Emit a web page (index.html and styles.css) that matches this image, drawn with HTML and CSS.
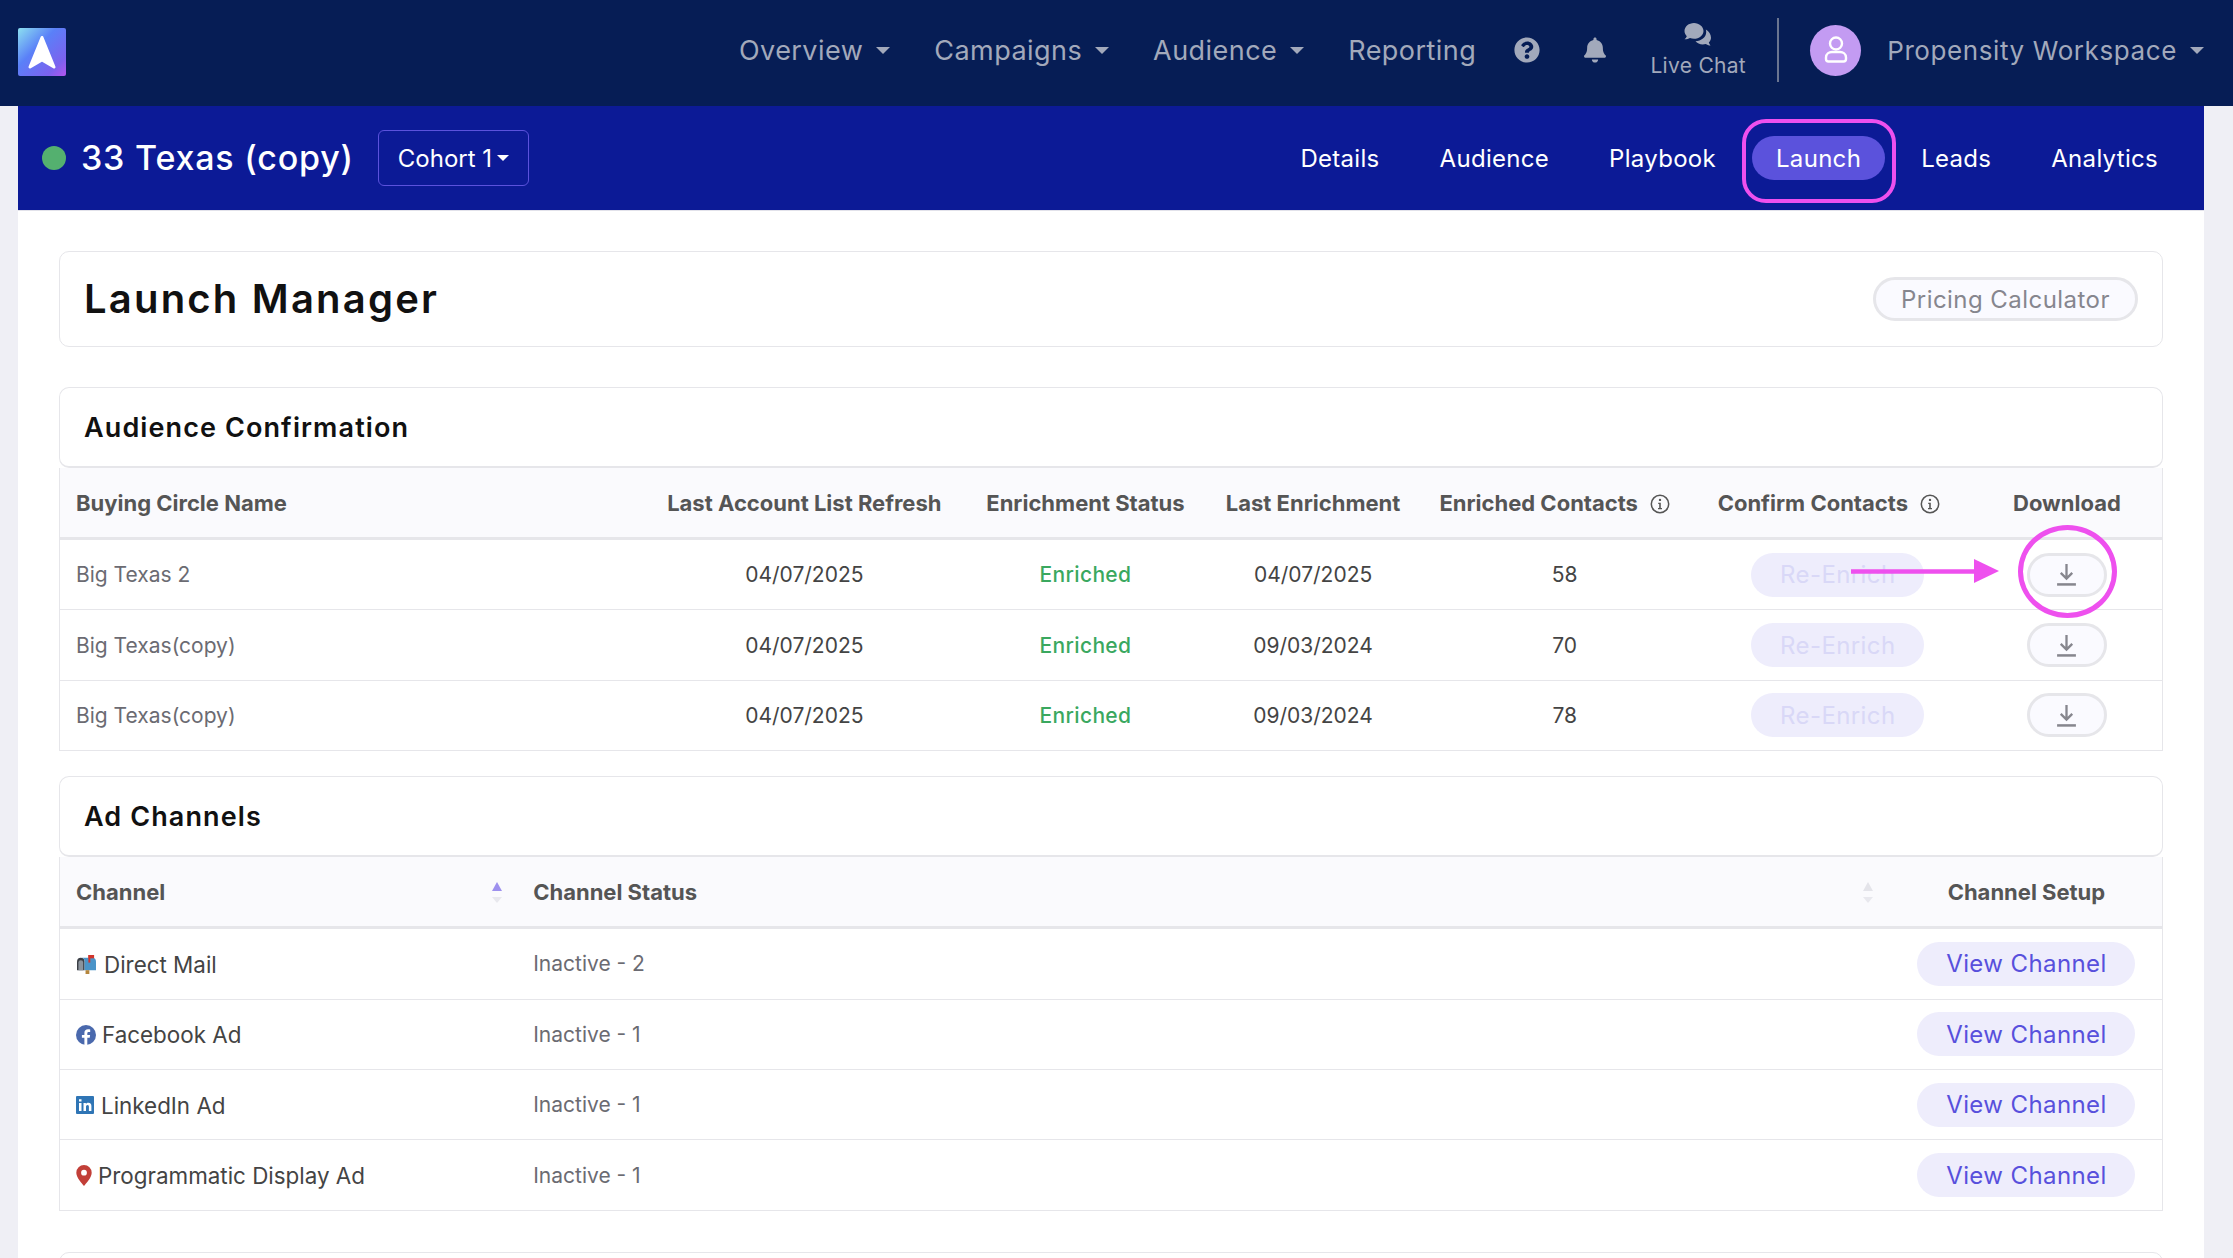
FILE: index.html
```html
<!DOCTYPE html>
<html lang="en">
<head>
<meta charset="utf-8">
<title>Launch Manager</title>
<link rel="stylesheet" href="styles.css">
</head>
<body>
<div class="page">
  <header class="topbar">
    <svg class="logo" viewBox="0 0 48 48"><defs><linearGradient id="lg" x1="0" y1="0" x2="1" y2="1"><stop offset="0" stop-color="#8ce0f0"/><stop offset=".4" stop-color="#5a80f8"/><stop offset=".8" stop-color="#7c62ee"/><stop offset="1" stop-color="#b455ee"/></linearGradient></defs><rect width="48" height="48" rx="2" fill="url(#lg)"/><path d="M24 9.500 36 39l-12-7-12 7z" fill="#fff" stroke="#fff" stroke-width="3" stroke-linejoin="round"/></svg>
    <nav class="mainnav">
      <a class="navlink caret">Overview</a>
      <a class="navlink caret">Campaigns</a>
      <a class="navlink caret">Audience</a>
      <a class="navlink">Reporting</a>
    </nav>
    <svg class="ico-help" viewBox="0 0 512 512"><path fill="#a2a9bb" d="M504 256c0 136.997-111.043 248-248 248S8 392.997 8 256C8 119.083 119.043 8 256 8s248 111.083 248 248zM262.655 90c-54.497 0-89.255 22.957-116.549 63.758-3.536 5.286-2.353 12.415 2.715 16.258l34.699 26.31c5.205 3.947 12.621 3.008 16.665-2.122 17.864-22.658 30.113-35.797 57.303-35.797 20.429 0 45.698 13.148 45.698 32.958 0 14.976-12.363 22.667-32.534 33.976C247.128 238.528 216 254.941 216 296v4c0 6.627 5.373 12 12 12h56c6.627 0 12-5.373 12-12v-1.333c0-28.462 83.186-29.647 83.186-106.667 0-58.002-60.165-102-116.531-102zM256 338c-25.365 0-46 20.635-46 46 0 25.364 20.635 46 46 46s46-20.636 46-46c0-25.365-20.635-46-46-46z"/></svg>
    <svg class="ico-bell" viewBox="0 0 448 512"><path fill="#a2a9bb" d="M224 512c35.32 0 63.97-28.65 63.97-64H160.03c0 35.35 28.65 64 63.97 64zm215.39-149.71c-19.32-20.76-55.47-51.99-55.47-154.29 0-77.7-54.48-139.9-127.94-155.16V32c0-17.67-14.32-32-31.98-32s-31.98 14.33-31.98 32v20.84C118.56 68.1 64.08 130.3 64.08 208c0 102.3-36.15 133.53-55.47 154.29-6 6.45-8.66 14.16-8.61 21.71.11 16.4 12.98 32 32.1 32h383.8c19.12 0 32-15.6 32.1-32 .05-7.55-2.61-15.27-8.61-21.71z"/></svg>
    <div class="chat">
      <svg class="ico-chat" viewBox="0 0 30 26"><g fill="#a2a9bb"><path d="M11 1C5.800 1 1.500 4.600 1.500 9c0 2 .9 3.800 2.300 5.200-.5 1.300-1.300 2.300-2.300 3.100 2 .1 3.900-.4 5.500-1.300 1.200.5 2.600.8 4 .8 5.200 0 9.500-3.600 9.500-7.800S16.200 1 11 1z"/><path d="M22.800 7.500c.3.800.4 1.600.4 2.500 0 5.300-5 9-10.700 9.200 1.600 2 4.300 3.200 7.200 3.200 1.100 0 2.100-.2 3.100-.5 1.200.9 2.800 1.500 4.700 1.600-.8-.9-1.400-1.800-1.700-3 1.400-1.300 2.200-3 2.200-4.800 0-3.500-2.100-6.500-5.200-8.200z"/></g></svg>
      <span class="chat-label">Live Chat</span>
    </div>
    <span class="divider"></span>
    <span class="avatar"><svg viewBox="0 0 32 32" width="32" height="32"><g fill="none" stroke="#fff" stroke-width="2.400"><circle cx="16" cy="9.500" r="6"/><path d="M8.500 27.500c-1.500 0-2.500-1-2.500-2.500v-1.500c0-3.500 3-5.500 6-5.500h8c3 0 6 2 6 5.500V25c0 1.500-1 2.500-2.500 2.500z"/></g></svg></span>
    <a class="workspace caret">Propensity Workspace</a>
  </header>

  <div class="content">
    <div class="subbar">
      <span class="status-dot"></span>
      <h1 class="camp-title">33 Texas (copy)</h1>
      <button class="cohort">Cohort 1<i class="mini-caret"></i></button>
      <nav class="tabs">
        <a class="tab">Details</a>
        <a class="tab">Audience</a>
        <a class="tab">Playbook</a>
        <a class="tab active">Launch</a>
        <a class="tab">Leads</a>
        <a class="tab">Analytics</a>
      </nav>
    </div>

    <main class="main">
      <section class="card title-card">
        <h2 class="page-title">Launch Manager</h2>
        <button class="ghost-btn">Pricing Calculator</button>
      </section>

      <section class="sec sec-aud">
        <div class="card sec-head"><h3 class="sec-title">Audience Confirmation</h3></div>
        <table class="tbl aud">
          <colgroup><col class="a1"><col class="a2"><col class="a3"><col class="a4"><col class="a5"><col class="a6"><col class="a7"></colgroup>
          <thead>
            <tr>
              <th class="left">Buying Circle Name</th>
              <th>Last Account List Refresh</th>
              <th>Enrichment Status</th>
              <th>Last Enrichment</th>
              <th class="th-c5">Enriched Contacts<svg class="info" viewBox="0 0 20 20"><use href="#i-info"/></svg></th>
              <th class="th-c6">Confirm Contacts<svg class="info" viewBox="0 0 20 20"><use href="#i-info"/></svg></th>
              <th class="c7">Download</th>
            </tr>
          </thead>
          <tbody>
            <tr>
              <td class="left name">Big Texas 2</td><td>04/07/2025</td><td class="ok">Enriched</td><td>04/07/2025</td><td>58</td>
              <td><button class="pill off">Re-Enrich</button></td>
              <td class="c7"><button class="dl"><svg viewBox="0 0 20 22"><use href="#i-dl"/></svg></button></td>
            </tr>
            <tr>
              <td class="left name">Big Texas(copy)</td><td>04/07/2025</td><td class="ok">Enriched</td><td>09/03/2024</td><td>70</td>
              <td><button class="pill off">Re-Enrich</button></td>
              <td class="c7"><button class="dl"><svg viewBox="0 0 20 22"><use href="#i-dl"/></svg></button></td>
            </tr>
            <tr>
              <td class="left name">Big Texas(copy)</td><td>04/07/2025</td><td class="ok">Enriched</td><td>09/03/2024</td><td>78</td>
              <td><button class="pill off">Re-Enrich</button></td>
              <td class="c7"><button class="dl"><svg viewBox="0 0 20 22"><use href="#i-dl"/></svg></button></td>
            </tr>
          </tbody>
        </table>
      </section>

      <section class="sec sec-ad">
        <div class="card sec-head"><h3 class="sec-title">Ad Channels</h3></div>
        <table class="tbl ad">
          <colgroup><col class="b1"><col class="b2"><col class="b3"></colgroup>
          <thead>
            <tr>
              <th class="left"><span class="th-sort">Channel<svg class="sort" viewBox="0 0 10 21"><path class="up on" d="M5 0l5 9H0z"/><path class="dn" d="M0 15h10l-5 6z"/></svg></span></th>
              <th class="left"><span class="th-sort st">Channel Status<svg class="sort" viewBox="0 0 10 21"><path class="up" d="M5 0l5 9H0z"/><path class="dn" d="M0 15h10l-5 6z"/></svg></span></th>
              <th>Channel Setup</th>
            </tr>
          </thead>
          <tbody>
            <tr>
              <td class="left ch"><span class="chan"><svg class="c-ico mail" viewBox="0 0 22 20"><path d="M1 7a4 4 0 0 1 8 0v9H1z" fill="#3b3f46"/><path d="M6 3h11a4 4 0 0 1 4 4v9H9V7a4 4 0 0 0-3-4z" fill="#4a94c8"/><path d="M2.500 8a2.500 2.500 0 0 1 5 0v8h-5z" fill="#8b939c"/><rect x="13" y="0" width="2" height="8" fill="#d2352c"/><rect x="13" y="0" width="6" height="3.500" fill="#d2352c"/><rect x="10" y="16" width="4" height="4" fill="#b5863c"/></svg>Direct Mail</span></td>
              <td class="left muted">Inactive - 2</td>
              <td><button class="pill">View Channel</button></td>
            </tr>
            <tr>
              <td class="left ch"><span class="chan"><svg class="c-ico fb" viewBox="0 0 20 20"><circle cx="10" cy="10" r="10" fill="#4a69ad"/><path d="M11.300 20v-7.200h2.400l.4-2.800h-2.800V8.300c0-.8.300-1.400 1.500-1.400h1.400V4.400c-.6-.1-1.400-.2-2.200-.2-2.200 0-3.600 1.300-3.600 3.700V10H5.900v2.800h2.500V20z" fill="#fff"/></svg>Facebook Ad</span></td>
              <td class="left muted">Inactive - 1</td>
              <td><button class="pill">View Channel</button></td>
            </tr>
            <tr>
              <td class="left ch"><span class="chan"><svg class="c-ico li" viewBox="0 0 18 18"><rect width="18" height="18" rx="1" fill="#2f75b5"/><path d="M3 7h2.500v8H3zM3 3.200h2.500v2.400H3zM7.500 7h2.400v1.100c.5-.8 1.400-1.300 2.500-1.300 2.200 0 3 1.400 3 3.500V15h-2.500v-4.200c0-1.100-.3-1.900-1.300-1.900S10 9.700 10 10.800V15H7.500z" fill="#fff"/></svg>LinkedIn Ad</span></td>
              <td class="left muted">Inactive - 1</td>
              <td><button class="pill">View Channel</button></td>
            </tr>
            <tr>
              <td class="left ch"><span class="chan"><svg class="c-ico pin" viewBox="0 0 16 21"><path fill-rule="evenodd" d="M8 0a7.700 7.700 0 0 1 7.700 7.700C15.700 12.500 10 18.500 8 21 6 18.500.300 12.500.300 7.700A7.700 7.700 0 0 1 8 0zm0 4.800a2.900 2.900 0 1 0 0 5.800 2.900 2.900 0 0 0 0-5.800z" fill="#c23f38"/></svg>Programmatic Display Ad</span></td>
              <td class="left muted">Inactive - 1</td>
              <td><button class="pill">View Channel</button></td>
            </tr>
          </tbody>
        </table>
      </section>

      <section class="card next-card"></section>
    </main>
  </div>

  <svg class="defs" width="0" height="0" aria-hidden="true">
    <symbol id="i-info" viewBox="0 0 20 20"><circle cx="10" cy="10" r="8.700" fill="none" stroke="#555" stroke-width="1.500"/><circle cx="10" cy="5.900" r="1.200" fill="#555"/><path d="M8.200 8.800h2.600v5.200h1.200v1.300H8v-1.300h1.200v-3.900h-1z" fill="#555"/></symbol>
    <symbol id="i-dl" viewBox="0 0 20 22"><path d="M10 1v13.500M4.500 9.500l5.500 5.500 5.500-5.500" fill="none" stroke="#86868e" stroke-width="2.200"/><path d="M1 20.500h18" stroke="#86868e" stroke-width="2.400"/></symbol>
  </svg>

  <div class="mark mark-tab"></div>
  <div class="mark mark-ring"></div>
  <svg class="mark-arrow" viewBox="0 0 148 24"><path d="M0 12.500h124" stroke="#ee50ee" stroke-width="4.500"/><path d="M123 0l25 12-25 12z" fill="#ee50ee"/></svg>
</div>
</body>
</html>
```
FILE: styles.css
```css
* { box-sizing: border-box; }
html, body { margin: 0; padding: 0; }
body {
  font-family: Inter, "Liberation Sans", sans-serif;
  background: #efeff5;
  color: #444;
}
button { font-family: inherit; cursor: pointer; }
h1, h2, h3 { margin: 0; }

.page { position: relative; width: 2233px; height: 1258px; overflow: hidden; }

/* top bar */
.topbar {
  height: 106px;
  background: #061d55;
  display: flex;
  align-items: center;
  padding: 0 29px 6px 18px;
  color: #a2a9bb;
}
.logo { width: 48px; height: 48px; margin-top: 4px; flex: none; }
.mainnav { display: flex; margin-left: auto; font-size: 27px; }
.navlink { display: inline-flex; align-items: center; letter-spacing: .45px; margin-right: 44px; }
.navlink:last-child { margin-right: 0; }
.caret::after {
  content: "";
  display: inline-block;
  margin-left: 13px;
  border-left: 7px solid transparent;
  border-right: 7px solid transparent;
  border-top: 7px solid #a2a9bb;
}
.ico-help { width: 26px; height: 26px; margin-left: 38px; flex: none; }
.ico-bell { width: 22px; height: 26px; margin-left: 44px; flex: none; }
.chat { display: flex; flex-direction: column; align-items: center; margin-left: 44px; width: 96px; }
.ico-chat { width: 30px; height: 26px; margin-bottom: 5px; }
.chat-label { font-size: 21px; line-height: 26px; letter-spacing: .3px; }
.divider { width: 2px; height: 64px; background: #6a7590; margin-left: 31px; flex: none; }
.avatar {
  width: 51px; height: 51px; border-radius: 50%;
  background: #c39bf2;
  display: flex; align-items: center; justify-content: center;
  margin-left: 31px; flex: none;
}
.workspace { display: inline-flex; align-items: center; font-size: 26px; letter-spacing: .6px; margin-left: 26px; white-space: nowrap; }

/* content shell */
.content { width: 2186px; margin-left: 18px; background: #fff; height: 1152px; }

.subbar {
  height: 105px;
  background: #0c1a96;
  border-bottom: 1px solid #e2e2ea;
  display: flex;
  align-items: center;
  padding: 0 22px 0 24px;
  color: #fff;
}
.status-dot { width: 24px; height: 24px; border-radius: 50%; background: #54b06f; flex: none; }
.camp-title { font-size: 34px; font-weight: 500; margin-left: 15px; letter-spacing: .8px; line-height: 40px; white-space: nowrap; }
.cohort {
  margin-left: 24px; height: 56px; width: 151px;
  background: transparent; color: #fff;
  border: 1.500px solid #5b52dc; border-radius: 6px;
  font-size: 24px; padding: 0;
  display: inline-flex; align-items: center; justify-content: center;
}
.mini-caret {
  display: inline-block; margin-left: 5px;
  border-left: 6px solid transparent;
  border-right: 6px solid transparent;
  border-top: 6px solid #fff;
}
.tabs { margin-left: auto; display: flex; gap: 12px; align-items: center; }
.tab {
  height: 44px; padding: 0 24px;
  display: inline-flex; align-items: center;
  border-radius: 22px;
  font-size: 24px; color: #fff; letter-spacing: .3px;
}
.tab.active { background: #5b52dc; }

/* main */
.main { padding: 40px 41px 0; }
.card {
  background: #fff;
  border: 1.500px solid #e6e6ea;
  border-radius: 10px;
}
.title-card {
  height: 96px;
  display: flex; align-items: center; justify-content: space-between;
  padding: 0 24px;
  margin-bottom: 40px;
}
.page-title { font-size: 40px; font-weight: 600; color: #111; letter-spacing: 2.200px; margin-top: -2px; }
.ghost-btn {
  height: 44px; width: 265px;
  background: #fafaff; color: #86868e;
  border: 3px solid #e6e6ea; border-radius: 22px;
  font-size: 24px; padding: 0; letter-spacing: .45px;
}
.sec-head { height: 81px; display: flex; align-items: center; padding-left: 24px; border-bottom-width: 2px; }
.sec-title { font-size: 27px; font-weight: 600; color: #111; letter-spacing: 1.100px; }
.sec-aud { margin-bottom: 25px; }
.sec-ad { margin-bottom: 41.500px; }
.next-card { height: 120px; }

/* tables */
.tbl {
  width: 2104px;
  table-layout: fixed;
  border-collapse: separate;
  border-spacing: 0;
  border-left: 1.500px solid #e6e6ea;
  border-right: 1.500px solid #e6e6ea;
  font-size: 21px;
}
.tbl th {
  height: 72px;
  background: #fafafd;
  border-bottom: 3px solid #e6e6ea;
  color: #555;
  font-weight: 700;
  font-size: 22px;
  text-align: center;
  white-space: nowrap;
  padding: 0;
}
.tbl td {
  height: 70.400px;
  border-bottom: 1.500px solid #e6e6ea;
  text-align: center;
  color: #444;
  padding: 0;
  white-space: nowrap;
}
.tbl .left { text-align: left; padding-left: 16px; }
.tbl td.name, .tbl td.muted { color: #6b6b72; }
.tbl td.ok { color: #3aa85f; font-weight: 500; letter-spacing: .35px; }
.tbl .c7 { padding-left: 12px; }
.a1 { width: 590px; } .a2 { width: 308px; } .a3 { width: 254px; } .a4 { width: 201px; }
.a5 { width: 302px; } .a6 { width: 244px; } .a7 { width: 202px; }
.b1 { width: 457px; } .b2 { width: 1373px; } .b3 { width: 271px; }
.th-c5 { padding-right: 20px !important; }
.th-c6 { padding-right: 18px !important; }
.info { width: 20px; height: 20px; margin-left: 12px; vertical-align: -3px; }
.defs { position: absolute; }

.pill {
  height: 44px; border: 0; border-radius: 22px;
  background: #eeedfc; color: #5850dc;
  font-size: 24px; padding: 0; width: 218px; letter-spacing: .4px;
}
.pill.off { width: 173px; color: #d9d8f7; }
.dl {
  width: 80px; height: 44px; padding: 0;
  background: #fafaff;
  border: 3px solid #e6e6ea; border-radius: 22px;
  display: inline-flex; align-items: center; justify-content: center;
}
.dl svg { width: 21px; height: 23px; }

.th-sort { display: flex; align-items: center; justify-content: space-between; padding-right: 15px; }
.th-sort.st { padding-right: 18px; }
.sort { width: 10px; height: 21px; margin-top: 2px; }
.sort .up { fill: #e4e4ea; }
.sort .up.on { fill: #9d90ee; }
.sort .dn { fill: #e8e8ee; }
.chan { display: inline-flex; align-items: center; color: #444; font-size: 22.400px; vertical-align: middle; }
.c-ico { flex: none; }
.c-ico.mail { width: 21px; height: 19px; margin-right: 7px; }
.c-ico.fb { width: 20px; height: 20px; margin-right: 6px; }
.c-ico.li { width: 18px; height: 18px; margin-right: 7px; }
.c-ico.pin { width: 16px; height: 21px; margin-right: 6px; }

/* annotations over the page */
.mark { position: absolute; border-style: solid; border-color: #ee50ee; }
.mark-tab { left: 1742px; top: 119px; width: 154px; height: 84px; border-radius: 24px; border-width: 4.500px; }
.mark-ring { left: 2018px; top: 525px; width: 99px; height: 93px; border-radius: 50%; border-width: 5px; }
.mark-arrow { position: absolute; left: 1851px; top: 559px; width: 148px; height: 24px; }
```
